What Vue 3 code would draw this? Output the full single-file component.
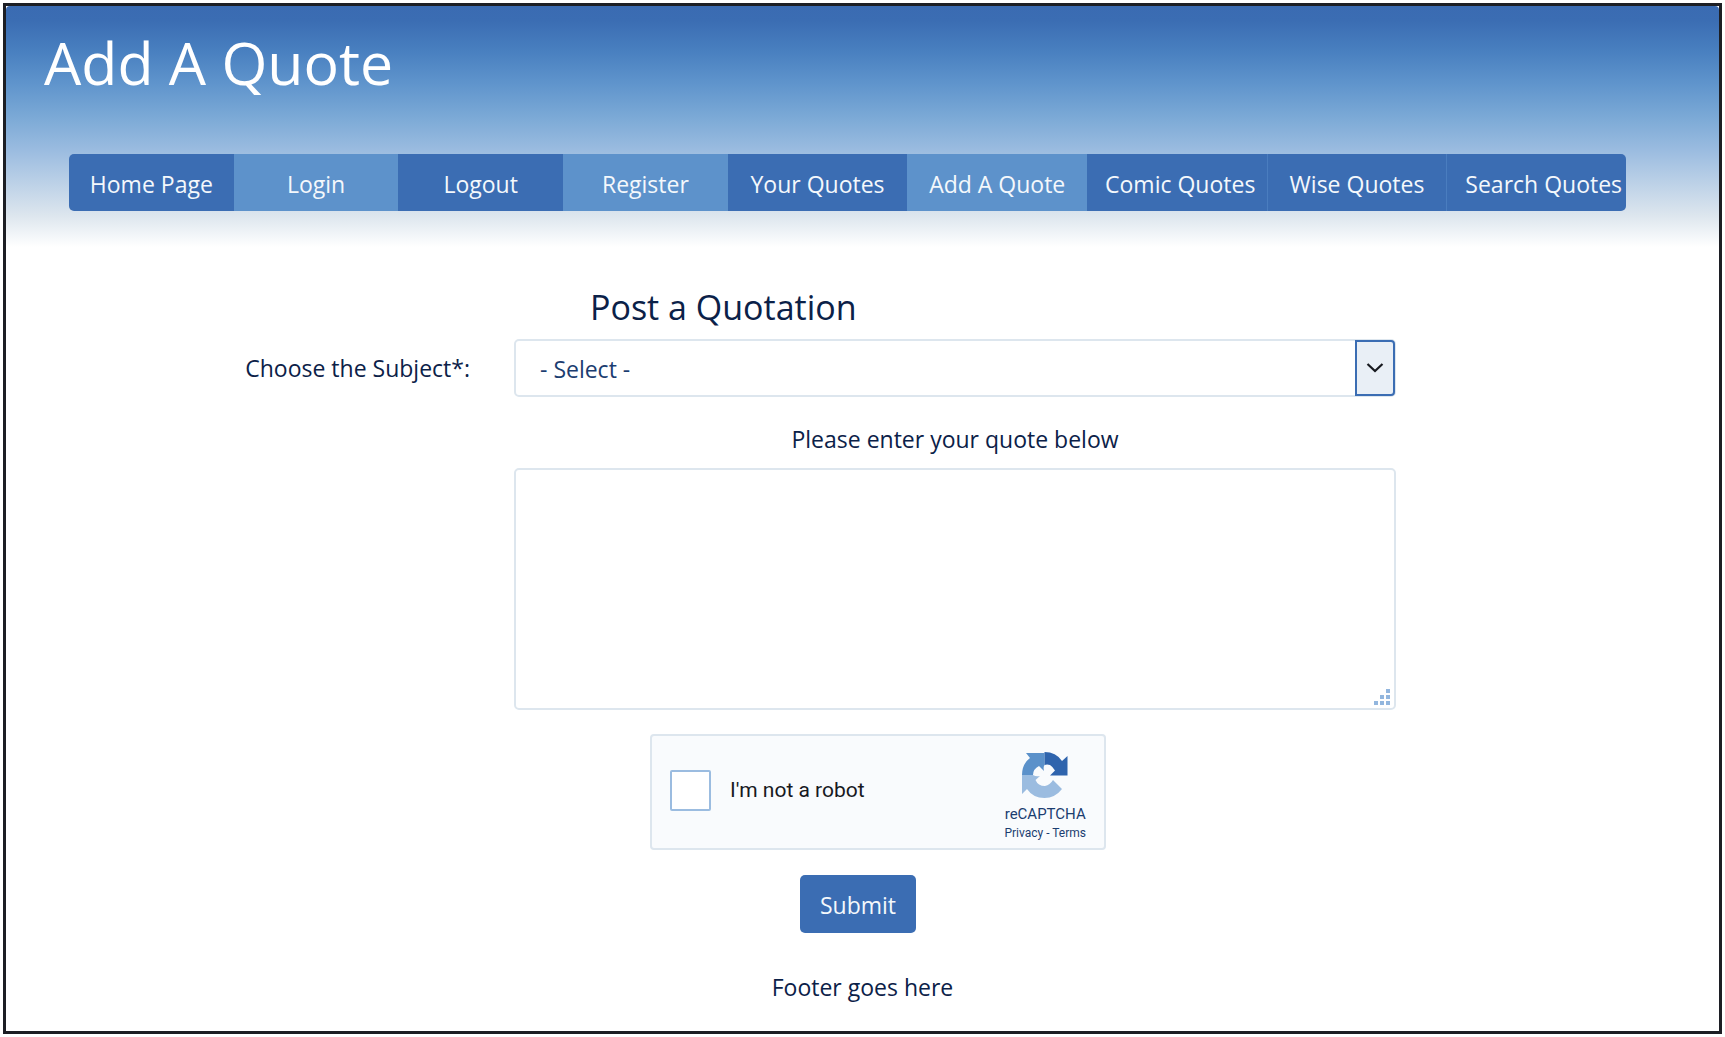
<script setup>
import { ref } from 'vue'

const links = [
  { label: 'Home Page', tone: 'dark' },
  { label: 'Login', tone: 'light' },
  { label: 'Logout', tone: 'dark' },
  { label: 'Register', tone: 'light' },
  { label: 'Your Quotes', tone: 'dark' },
  { label: 'Add A Quote', tone: 'light' },
  { label: 'Comic Quotes', tone: 'dark' },
  { label: 'Wise Quotes', tone: 'dark' },
  { label: 'Search Quotes', tone: 'dark' },
]

const subject = ref('')
const quote = ref('')
const human = ref(false)
</script>

<template>
  <div class="page">
    <div class="frame">
      <header class="banner">
        <h1>Add A Quote</h1>
        <nav class="menu">
          <a v-for="link in links" :key="link.label" href="#" :class="link.tone">{{ link.label }}</a>
        </nav>
      </header>

      <form class="quote-form" @submit.prevent>
        <h2>Post a Quotation</h2>

        <label class="subject-label" for="subject">Choose the Subject*:</label>
        <div class="select-box">
          <select id="subject" v-model="subject">
            <option value="">- Select -</option>
          </select>
          <span class="arrow">
            <svg width="18" height="10" viewBox="0 0 18 10" aria-hidden="true">
              <path d="M1.5 1 L9 8 L16.5 1" fill="none" stroke="#17191f" stroke-width="2.2" />
            </svg>
          </span>
        </div>

        <label class="quote-label" for="quote">Please enter your quote below</label>
        <div class="quote-box">
          <textarea id="quote" v-model="quote"></textarea>
          <svg class="grip" width="16" height="16" viewBox="0 0 16 16" fill="#92b6de" aria-hidden="true">
            <rect x="12" y="0" width="4" height="4" />
            <rect x="6" y="6" width="4" height="4" />
            <rect x="12" y="6" width="4" height="4" />
            <rect x="0" y="12" width="4" height="4" />
            <rect x="6" y="12" width="4" height="4" />
            <rect x="12" y="12" width="4" height="4" />
          </svg>
        </div>

        <div class="captcha">
          <label class="robot">
            <input v-model="human" type="checkbox" />
            <span>I'm not a robot</span>
          </label>
          <div class="brand">
            <svg width="46" height="46" viewBox="0 0 46 46" aria-hidden="true">
              <path fill="#9bbce0" d="M0 23 H11 Q14 25 18 24 L13.500 28 Q16 34 23 34 Q28 33 31 28 L40 37 Q33 46 22.500 46 Q11 46 5 37 L0 42 Z" />
              <path fill="#5b91ca" d="M0 23 Q0 12 8 6 L4 1 H22.500 V13 Q21 15 22 19 L17 14 Q11 17 11 23 Z" />
              <path fill="#2f64ad" d="M22.500 0 Q34 0 40 9 L45.500 4 V23.500 H28 L33 18.500 Q31 15 28 13 Q25 12 22.500 13 Z" />
            </svg>
            <span class="brand-name">reCAPTCHA</span>
            <span class="brand-links"><a href="#">Privacy</a> - <a href="#">Terms</a></span>
          </div>
        </div>

        <button type="submit">Submit</button>
      </form>

      <footer>Footer goes here</footer>
    </div>
  </div>
</template>

<style>
body {
  background: #fff;
}
</style>

<style scoped>
* {
  box-sizing: border-box;
}

.page {
  min-height: 100vh;
  padding: 3px;
  display: flex;
  color: #0b2148;
  font-family: "Open Sans", "Noto Sans", sans-serif;
  font-size: 23px;
  line-height: 32px;
}

.frame {
  flex: 1;
  min-width: 0;
  border: 3px solid #1c1e24;
}

.banner {
  padding: 20px 93px 36px 63px;
  border-radius: 4px 4px 0 0;
  background: linear-gradient(#3a6bb2 0%, #3b6db3 6%, #4980c0 19%, #5f94cc 32%, #7ba9d6 46%, #9bbce0 60%, #dde6ee 87%, #fff 100%);
}

h1 {
  margin: 0 0 56px -25px;
  color: #fff;
  font-size: 59px;
  font-weight: 400;
  line-height: 72px;
}

.menu {
  display: grid;
  grid-template-columns: repeat(4, 11fr) repeat(5, 12fr);
  border-radius: 5px;
  overflow: hidden;
}

.menu a {
  min-width: 0;
  padding: 3px 18px 0;
  color: #f4f8fc;
  line-height: 54px;
  text-align: center;
  text-decoration: none;
  white-space: nowrap;
}

.dark {
  background: #3b6db3;
}

.light {
  background: #5d92cb;
}

.dark + .dark {
  border-left: 1px solid #4a7dbf;
}

.quote-form {
  display: grid;
  grid-template-columns: 508fr 882fr 323fr;
  padding-top: 38px;
}

h2 {
  grid-column: 2;
  margin: 0 0 10px 76px;
  font-size: 34px;
  font-weight: 400;
  line-height: 44px;
}

.subject-label {
  grid-column: 1;
  align-self: center;
  padding-right: 44px;
  text-align: right;
}

.select-box,
.quote-box {
  grid-column: 2;
  position: relative;
  display: flex;
}

select {
  flex: 1;
  height: 58px;
  padding: 2px 60px 0 24px;
  appearance: none;
  border: 2px solid #dde6ee;
  border-radius: 5px;
  background: #fff;
  color: #1b3d70;
  font: inherit;
}

.arrow {
  position: absolute;
  top: 1px;
  right: 1px;
  bottom: 1px;
  width: 40px;
  display: flex;
  align-items: center;
  justify-content: center;
  border: 2px solid #3b6db3;
  border-radius: 0 4px 4px 0;
  background: #e9eff6;
  pointer-events: none;
}

.quote-label {
  grid-column: 2;
  margin: 26px 0 13px;
  text-align: center;
}

textarea {
  flex: 1;
  height: 242px;
  padding: 10px 24px;
  border: 2px solid #dde6ee;
  border-radius: 5px;
  background: #fff;
  color: inherit;
  font: inherit;
  resize: none;
}

.grip {
  position: absolute;
  right: 6px;
  bottom: 5px;
  pointer-events: none;
}

.captcha {
  grid-column: 2;
  display: flex;
  justify-content: space-between;
  width: 456px;
  height: 116px;
  margin: 24px 0 25px 136px;
  padding: 0 18px;
  border: 2px solid #dde6ee;
  border-radius: 4px;
  background: #f9fbfd;
  font-family: Roboto, sans-serif;
}

.robot {
  display: flex;
  align-items: center;
  gap: 19px;
  padding-bottom: 4px;
  color: #17191f;
  font-size: 21px;
}

.robot input {
  width: 41px;
  height: 41px;
  margin: 0;
  appearance: none;
  border: 2px solid #9bbce0;
  border-radius: 2px;
  background: #fff;
}

.robot input:checked {
  background: #3b6db3;
}

.brand {
  display: flex;
  flex-direction: column;
  align-items: center;
  padding-top: 16px;
  color: #1b3d70;
}

.brand-name {
  margin-top: 6px;
  font-size: 15px;
  line-height: 20px;
}

.brand-links {
  font-size: 12px;
  line-height: 18px;
}

.brand-links a {
  color: inherit;
  text-decoration: none;
}

button {
  grid-column: 2;
  justify-self: start;
  width: 116px;
  height: 58px;
  margin-left: 286px;
  padding: 2px 0 0;
  border: 0;
  border-radius: 5px;
  background: #3b6db3;
  color: #f4f8fc;
  font: inherit;
}

footer {
  margin-top: 38px;
  text-align: center;
}
</style>
